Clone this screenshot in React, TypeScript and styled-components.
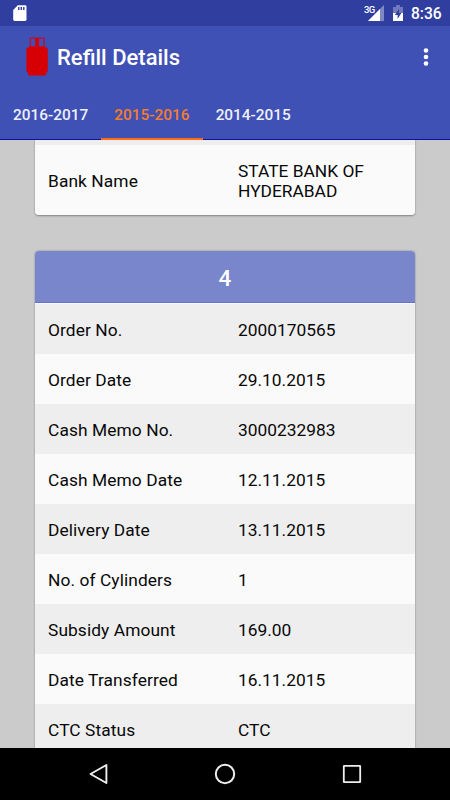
import React from "react";
import styled, { createGlobalStyle } from "styled-components";

const GlobalStyle = createGlobalStyle`
  * { box-sizing: border-box; }
  body { margin: 0; background: #cbcbcb; font-family: Roboto, sans-serif; }
`;

const Screen = styled.div`
  width: 450px;
  height: 800px;
  display: flex;
  flex-direction: column;
  overflow: hidden;
  background: #cbcbcb;
`;

const StatusBar = styled.div`
  height: 26px;
  flex: none;
  display: flex;
  align-items: center;
  justify-content: space-between;
  padding: 1px 8px 0 13px;
  background: #303f9f;
  color: #fff;
`;

const StatusGroup = styled.div`
  display: flex;
  align-items: center;
`;

const Network = styled.span`
  width: 11px;
  height: 17px;
  font-size: 9.5px;
  line-height: 9px;
  font-weight: 500;
  letter-spacing: -0.6px;
`;

const Signal = styled.svg`
  margin-right: 9px;
  margin-left: -8px;
`;

const Clock = styled.span`
  width: 31px;
  margin-left: 8px;
  padding-top: 1px;
  font-size: 15.6px;
  line-height: 25px;
  font-weight: 500;
  white-space: nowrap;
`;

const AppBar = styled.header`
  height: 64px;
  flex: none;
  display: flex;
  align-items: center;
  padding: 0 20px 2px 26px;
  background: #3f51b5;
  color: #fff;
`;

const Title = styled.h1`
  flex: 1;
  margin: 2px 0 0 9px;
  font-size: 22px;
  line-height: 26px;
  font-weight: 500;
`;

const Tabs = styled.nav`
  height: 50px;
  flex: none;
  display: flex;
  background: #3f51b5;
  box-shadow: inset 0 -1px #0a119b;
`;

const Tab = styled.div<{ $active?: boolean }>`
  width: 101.3px;
  height: 50px;
  padding-top: 1px;
  text-align: center;
  font-size: 15.4px;
  line-height: 48px;
  font-weight: 500;
  white-space: nowrap;
  color: ${(p) => (p.$active ? "#f57c2a" : "#eef0fb")};
  border-bottom: 2px solid ${(p) => (p.$active ? "#ff6a13" : "transparent")};
`;

const Content = styled.main`
  flex: 1;
  min-height: 0;
  overflow: hidden;
  padding: 0 35px;
`;

const Card = styled.section<{ $continued?: boolean }>`
  background: #fafafa;
  border-radius: ${(p) => (p.$continued ? "0 0 4px 4px" : "4px")};
  margin-bottom: 35.3px;
  overflow: hidden;
  box-shadow: 0 0.5px 2px rgba(0, 0, 0, 0.35), 0 0 1px rgba(0, 0, 0, 0.25);
`;

const RowRemainder = styled.div`
  height: 5px;
  background: #eee;
`;

const CardHeader = styled.h2`
  height: 53.8px;
  margin: 0;
  border-bottom: 1px solid #fafafa;
  background: #7986cb;
  box-shadow: inset 0 -1px #6372ce;
  color: #fff;
  font-size: 22.5px;
  line-height: 54px;
  font-weight: 500;
  text-align: center;
`;

const Row = styled.div<{ $shaded?: boolean; $tall?: boolean }>`
  height: ${(p) => (p.$tall ? 70.4 : 50)}px;
  display: grid;
  grid-template-columns: 190px 1fr;
  align-items: center;
  padding: ${(p) => (p.$tall ? 2 : 1)}px 13px 0;
  background: ${(p) => (p.$shaded ? "#eee" : "#fafafa")};
  color: #080808;
  font-size: 17.35px;
  line-height: 20.5px;
`;

const Label = styled.span`
  letter-spacing: 0.09px;
`;

const Value = styled.span``;

const NavBar = styled.footer`
  height: 52px;
  flex: none;
  background: #000;
  display: flex;
  justify-content: center;
  align-items: center;
  gap: 104.5px;
`;

const records = [
  ["Order No.", "2000170565"],
  ["Order Date", "29.10.2015"],
  ["Cash Memo No.", "3000232983"],
  ["Cash Memo Date", "12.11.2015"],
  ["Delivery Date", "13.11.2015"],
  ["No. of Cylinders", "1"],
  ["Subsidy Amount", "169.00"],
  ["Date Transferred", "16.11.2015"],
  ["CTC Status", "CTC"],
];

const MemoryCardIcon = () => (
  <svg width="14" height="17" viewBox="0 0 14 17">
    <path d="M4.8 0.2H12.2Q13.5 0.2 13.5 1.6V14.6Q13.5 16 12.2 16H1.6Q.2 16 .2 14.6V5Z" fill="#fff" />
    <path d="M5.8 2V5M8.3 2V5M10.8 2V5" stroke="#303f9f" strokeWidth="1.4" />
  </svg>
);

const SignalIcon = () => (
  <Signal width="17" height="17" viewBox="0 0 17 17">
    <path d="M17 0V16H1Z" fill="#7f89c4" />
    <path d="M13 4V16H1Z" fill="#fff" />
  </Signal>
);

const BatteryIcon = () => (
  <svg width="10" height="17" viewBox="0 0 10 17">
    <path d="M3 0H7V2H10V8H0V2H3Z" fill="#7079ba" />
    <path d="M0 8H10V16H0Z" fill="#fff" />
    <path d="M6 4L1.8 10H4.6V14L8.4 8H6Z" fill="#303f9f" />
  </svg>
);

const CylinderIcon = () => (
  <svg width="22" height="40" viewBox="0 0 22 40">
    <path d="M3.4 1.2H18.7M4.3 2V10M18 2V10" stroke="#c00d2c" strokeWidth="1.3" fill="none" />
    <path d="M9 1H13.2V9H9Z" fill="#cc0412" />
    <path d="M4 9.2H18.3L21 11Q21.8 11.8 21.8 13V33Q21.8 34.7 20.5 35.2V36.5Q20.5 38.4 18.8 38.4H3.5Q1.8 38.4 1.8 36.5V35.2Q.4 34.7 .4 33V13Q.4 11.8 1.2 11Z" fill="#d60004" />
  </svg>
);

const MoreIcon = () => (
  <svg width="8" height="20" viewBox="0 0 8 20" fill="#fff">
    <circle cx="4" cy="3.5" r="2.3" />
    <circle cx="4" cy="10" r="2.3" />
    <circle cx="4" cy="16.5" r="2.3" />
  </svg>
);

const BackIcon = () => (
  <svg width="22" height="22" viewBox="0 0 22 22" fill="none" stroke="#eee" strokeWidth="1.9" strokeLinejoin="round">
    <path d="M18.4 2V20L2.5 11Z" />
  </svg>
);

const HomeIcon = () => (
  <svg width="22" height="22" viewBox="0 0 22 22" fill="none" stroke="#eee" strokeWidth="2">
    <circle cx="11" cy="11" r="9.2" />
  </svg>
);

const RecentsIcon = () => (
  <svg width="22" height="22" viewBox="0 0 22 22" fill="none" stroke="#eee" strokeWidth="1.8">
    <rect x="2.8" y="2.8" width="16.4" height="16.4" rx=".5" />
  </svg>
);

export default function App() {
  return (
    <>
      <GlobalStyle />
      <Screen>
        <StatusBar>
          <MemoryCardIcon />
          <StatusGroup>
            <Network>3G</Network>
            <SignalIcon />
            <BatteryIcon />
            <Clock>8:36</Clock>
          </StatusGroup>
        </StatusBar>
        <AppBar>
          <CylinderIcon />
          <Title>Refill Details</Title>
          <MoreIcon />
        </AppBar>
        <Tabs>
          <Tab>2016-2017</Tab>
          <Tab $active>2015-2016</Tab>
          <Tab>2014-2015</Tab>
        </Tabs>
        <Content>
          <Card $continued>
            <RowRemainder />
            <Row $tall>
              <Label>Bank Name</Label>
              <Value>STATE BANK OF HYDERABAD</Value>
            </Row>
          </Card>
          <Card>
            <CardHeader>4</CardHeader>
            {records.map(([label, value], i) => (
              <Row key={label} $shaded={i % 2 === 0}>
                <Label>{label}</Label>
                <Value>{value}</Value>
              </Row>
            ))}
          </Card>
        </Content>
        <NavBar>
          <BackIcon />
          <HomeIcon />
          <RecentsIcon />
        </NavBar>
      </Screen>
    </>
  );
}
